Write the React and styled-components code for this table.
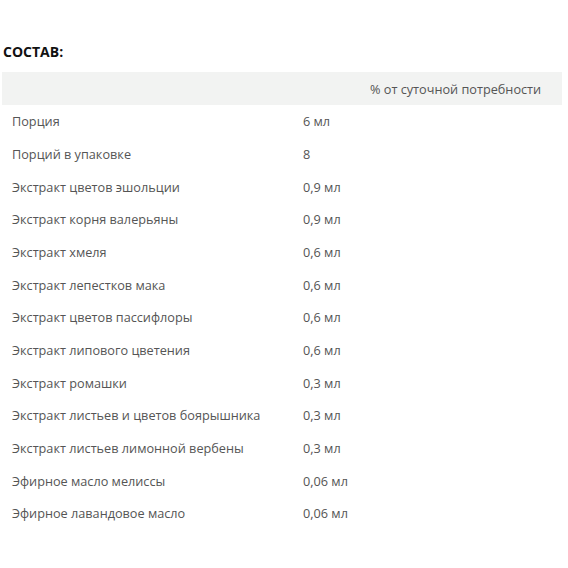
import React from 'react';
import styled, { createGlobalStyle } from 'styled-components';

const rows = [
  ['Порция', '6 мл'],
  ['Порций в упаковке', '8'],
  ['Экстракт цветов эшольции', '0,9 мл'],
  ['Экстракт корня валерьяны', '0,9 мл'],
  ['Экстракт хмеля', '0,6 мл'],
  ['Экстракт лепестков мака', '0,6 мл'],
  ['Экстракт цветов пассифлоры', '0,6 мл'],
  ['Экстракт липового цветения', '0,6 мл'],
  ['Экстракт ромашки', '0,3 мл'],
  ['Экстракт листьев и цветов боярышника', '0,3 мл'],
  ['Экстракт листьев лимонной вербены', '0,3 мл'],
  ['Эфирное масло мелиссы', '0,06 мл'],
  ['Эфирное лавандовое масло', '0,06 мл'],
];

const GlobalStyle = createGlobalStyle`
  body {
    margin: 0;
    background: #fff;
    font-family: 'Open Sans', 'Noto Sans', sans-serif;
  }
`;

const Wrapper = styled.section`
  width: 560px;
  padding: 42px 0 0 2px;
`;

const Title = styled.h3`
  margin: 0 0 10px 1px;
  font-size: 14px;
  font-weight: 700;
  line-height: 20px;
  color: #111;
`;

const Table = styled.table`
  width: 100%;
  border-collapse: collapse;
  font-size: 12.7px;
  color: #555;
`;

const HeadRow = styled.tr`
  background: #f2f3f2;
  height: 33px;
`;

const Row = styled.tr`
  height: 32.67px;
`;

const Cell = styled.td`
  padding: 0 10px;
  vertical-align: middle;
  width: ${props => props.width || 'auto'};
  white-space: nowrap;
`;

const App = () => {
  return (
    <>
      <GlobalStyle />
      <Wrapper>
        <Title>СОСТАВ:</Title>
        <Table>
          <thead>
            <HeadRow>
              <Cell width="271px" />
              <Cell width="47px" />
              <Cell>% от суточной потребности</Cell>
            </HeadRow>
          </thead>
          <tbody>
            {rows.map(([name, value]) => (
              <Row key={name}>
                <Cell>{name}</Cell>
                <Cell>{value}</Cell>
                <Cell />
              </Row>
            ))}
          </tbody>
        </Table>
      </Wrapper>
    </>
  );
};

export default App;
